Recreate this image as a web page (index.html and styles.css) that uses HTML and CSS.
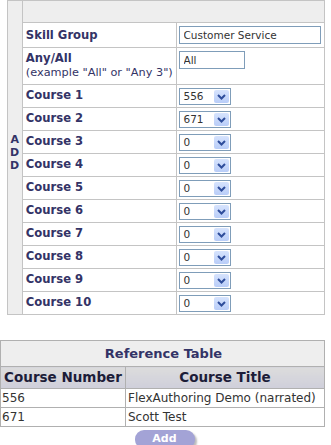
FILE: index.html
```html
<!DOCTYPE html>
<html lang="en">
<head>
    <meta charset="UTF-8">
    <title>Add Skill Group</title>
    <link rel="stylesheet" href="styles.css">
</head>
<body>
    <table class="add-table">
        <tr class="head-row">
            <td class="side" rowspan="14">A<br>D<br>D</td>
            <td colspan="2">&nbsp;</td>
        </tr>
        <tr class="row-skill">
            <td class="label">Skill Group</td>
            <td class="value"><input type="text" class="text-in wide" value="Customer Service"></td>
        </tr>
        <tr class="row-any">
            <td class="label">Any/All<br><span class="hint">(example "All" or "Any 3")</span></td>
            <td class="value"><input type="text" class="text-in short" value="All"></td>
        </tr>
        <tr class="row-course"><td class="label">Course 1</td><td class="value"><div class="dropdown"><span class="dd-text">556</span><span class="dd-btn"><svg width="9" height="6" viewBox="0 0 9 6"><path d="M1 1 L4.5 4.5 L8 1" fill="none" stroke="#2e4d9b" stroke-width="2"/></svg></span></div></td></tr>
        <tr class="row-course"><td class="label">Course 2</td><td class="value"><div class="dropdown"><span class="dd-text">671</span><span class="dd-btn"><svg width="9" height="6" viewBox="0 0 9 6"><path d="M1 1 L4.5 4.5 L8 1" fill="none" stroke="#2e4d9b" stroke-width="2"/></svg></span></div></td></tr>
        <tr class="row-course"><td class="label">Course 3</td><td class="value"><div class="dropdown"><span class="dd-text">0</span><span class="dd-btn"><svg width="9" height="6" viewBox="0 0 9 6"><path d="M1 1 L4.5 4.5 L8 1" fill="none" stroke="#2e4d9b" stroke-width="2"/></svg></span></div></td></tr>
        <tr class="row-course"><td class="label">Course 4</td><td class="value"><div class="dropdown"><span class="dd-text">0</span><span class="dd-btn"><svg width="9" height="6" viewBox="0 0 9 6"><path d="M1 1 L4.5 4.5 L8 1" fill="none" stroke="#2e4d9b" stroke-width="2"/></svg></span></div></td></tr>
        <tr class="row-course"><td class="label">Course 5</td><td class="value"><div class="dropdown"><span class="dd-text">0</span><span class="dd-btn"><svg width="9" height="6" viewBox="0 0 9 6"><path d="M1 1 L4.5 4.5 L8 1" fill="none" stroke="#2e4d9b" stroke-width="2"/></svg></span></div></td></tr>
        <tr class="row-course"><td class="label">Course 6</td><td class="value"><div class="dropdown"><span class="dd-text">0</span><span class="dd-btn"><svg width="9" height="6" viewBox="0 0 9 6"><path d="M1 1 L4.5 4.5 L8 1" fill="none" stroke="#2e4d9b" stroke-width="2"/></svg></span></div></td></tr>
        <tr class="row-course"><td class="label">Course 7</td><td class="value"><div class="dropdown"><span class="dd-text">0</span><span class="dd-btn"><svg width="9" height="6" viewBox="0 0 9 6"><path d="M1 1 L4.5 4.5 L8 1" fill="none" stroke="#2e4d9b" stroke-width="2"/></svg></span></div></td></tr>
        <tr class="row-course"><td class="label">Course 8</td><td class="value"><div class="dropdown"><span class="dd-text">0</span><span class="dd-btn"><svg width="9" height="6" viewBox="0 0 9 6"><path d="M1 1 L4.5 4.5 L8 1" fill="none" stroke="#2e4d9b" stroke-width="2"/></svg></span></div></td></tr>
        <tr class="row-course"><td class="label">Course 9</td><td class="value"><div class="dropdown"><span class="dd-text">0</span><span class="dd-btn"><svg width="9" height="6" viewBox="0 0 9 6"><path d="M1 1 L4.5 4.5 L8 1" fill="none" stroke="#2e4d9b" stroke-width="2"/></svg></span></div></td></tr>
        <tr class="row-course"><td class="label">Course 10</td><td class="value"><div class="dropdown"><span class="dd-text">0</span><span class="dd-btn"><svg width="9" height="6" viewBox="0 0 9 6"><path d="M1 1 L4.5 4.5 L8 1" fill="none" stroke="#2e4d9b" stroke-width="2"/></svg></span></div></td></tr>
    </table>

    <table class="ref-table">
        <tr class="ref-title"><td colspan="2">Reference Table</td></tr>
        <tr class="ref-head"><th class="col-num">Course Number</th><th>Course Title</th></tr>
        <tr><td>556</td><td>FlexAuthoring Demo (narrated)</td></tr>
        <tr><td>671</td><td>Scott Test</td></tr>
    </table>

    <div class="actions">
        <span class="add-btn">Add</span>
    </div>
</body>
</html>
```

FILE: styles.css
```css
body {
    margin: 0;
    font-family: "DejaVu Sans", Verdana, sans-serif;
    color: #333366;
    background: #ffffff;
}
table {
    border-collapse: collapse;
}

/* add form */
.add-table {
    width: 318px;
    margin: 0 auto;
    border: 1px solid #1c1c38;
}
.add-table td {
    border: 1px solid #c4c4c4;
    padding: 3px 3px 0 3px;
    vertical-align: top;
}
.add-table td.side {
    width: 15px;
    padding: 0 0 10px 0;
    background: #eeeeee;
    text-align: center;
    vertical-align: middle;
    font-size: 11px;
    font-weight: bold;
    line-height: 13px;
}
.add-table .head-row td {
    height: 21px;
    padding: 0;
    background: #eeeeee;
}
.add-table .head-row td.side {
    padding: 0 0 10px 0;
}
.add-table td.label {
    width: 150px;
    padding-right: 0;
    font-size: 11.6px;
    font-weight: bold;
    line-height: 14px;
    white-space: nowrap;
}
.label .hint {
    font-weight: normal;
    font-size: 11.3px;
}
.add-table .row-skill td {
    height: 21px;
}
.add-table .row-skill td.label {
    padding-top: 5px;
    height: 19px;
}
.add-table .row-any td {
    height: 33px;
}
.add-table .row-course td {
    height: 19px;
}
.add-table td.value {
    padding-left: 2px;
}
.text-in {
    display: block;
    box-sizing: border-box;
    height: 18px;
    margin: 0;
    padding: 0 4px;
    border: 1px solid #7f9db9;
    font-family: "DejaVu Sans", Verdana, sans-serif;
    font-size: 10.5px;
    color: #333333;
    background: #ffffff;
}
.text-in.wide {
    width: 142px;
}
.text-in.short {
    width: 66px;
}
.dropdown {
    box-sizing: border-box;
    display: flex;
    align-items: stretch;
    width: 52px;
    height: 17px;
    border: 1px solid #7f9db9;
    background: #ffffff;
    padding: 1px;
}
.dd-text {
    flex: 1;
    font-size: 10.5px;
    line-height: 13px;
    padding-left: 3px;
    color: #333333;
}
.dd-btn {
    width: 15px;
    display: flex;
    align-items: center;
    justify-content: center;
    background: linear-gradient(#d6e3fd, #b9cdf8);
    border-radius: 2px;
}

/* reference table */
.ref-table {
    width: 325px;
    margin-top: 25px;
    border: 1px solid #1c1c38;
}
.ref-table td,
.ref-table th {
    border: 1px solid #b0b0b0;
    padding: 2px 2px 2px 1px;
    font-size: 12px;
    line-height: 14px;
    color: #333333;
    text-align: left;
}
.ref-table .ref-title td {
    background: #eeeeee;
    text-align: center;
    font-weight: bold;
    color: #333366;
    font-size: 13px;
    line-height: 15px;
    padding: 5px 0;
}
.ref-table .ref-head th {
    background: linear-gradient(#dcdcdc, #cfcfdb);
    text-align: center;
    font-size: 13.5px;
    line-height: 15px;
    color: #1c1c38;
    padding: 3px 0;
}
.ref-table td:last-child {
    padding-left: 2px;
}
.col-num {
    width: 124px;
}
.actions {
    display: flex;
    justify-content: center;
    padding-top: 3px;
}
.add-btn {
    display: block;
    width: 60px;
    height: 19px;
    margin-left: -2px;
    border-radius: 9px;
    background: #a3a3d6;
    color: #ffffff;
    font-size: 11px;
    font-weight: bold;
    line-height: 17px;
    text-align: center;
    box-shadow: 2px 2px 2px #bcbcbc;
}
```
